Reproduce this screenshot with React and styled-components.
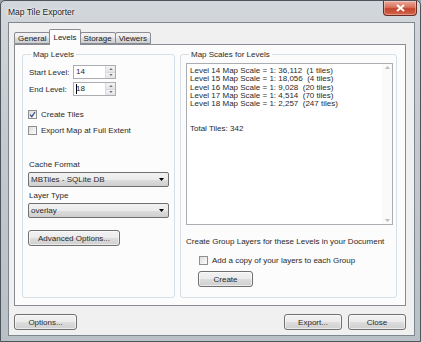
import React from 'react';
import styled, { createGlobalStyle } from 'styled-components';

const GlobalStyle = createGlobalStyle`
  html, body { margin: 0; padding: 0; background: #9aa3ab; }
  body { font-family: "Liberation Sans", Arial, sans-serif; font-size: 8px; color: #2a2a2a; }
`;

const Window = styled.div`
  width: 421px;
  height: 342px;
  box-sizing: border-box;
  padding: 21px 5px 5px 7px;
  display: flex;
  flex-direction: column;
  border: 1px solid #4e545b;
  border-radius: 5px 5px 0 0;
  background: linear-gradient(to bottom, #d3d7db 0%, #c3c9ce 40%, #b9c0c6 100%);
  position: relative;
`;

const TitleBar = styled.div`
  position: absolute;
  left: 0;
  right: 0;
  top: 0;
  height: 20px;
  display: flex;
  align-items: center;
  justify-content: space-between;
  padding: 0 3px 0 7px;
`;

const Title = styled.div`
  font-size: 8.5px;
  color: #1b1b1b;
  text-shadow: 0 0 4px #fff, 0 0 2px #fff;
  margin-top: 1px;
`;

const CloseButton = styled.div`
  width: 34px;
  height: 15px;
  margin-top: -5px;
  box-sizing: border-box;
  border: 1px solid #6b2a22;
  border-top: none;
  border-radius: 0 0 4px 4px;
  background: linear-gradient(to bottom, #e9a99b 0%, #d9725d 45%, #c4452d 55%, #d2634a 100%);
  box-shadow: inset 0 0 0 1px rgba(255, 255, 255, 0.35);
  display: flex;
  align-items: center;
  justify-content: center;
`;

const Client = styled.div`
  flex: 1;
  display: flex;
  flex-direction: column;
  box-sizing: border-box;
  border: 1px solid #7f868e;
  background: #f0f0f0;
  padding: 6px 8px 0 5px;
`;

const TabStrip = styled.div`
  display: flex;
  align-items: flex-end;
  height: 15px;
  padding-left: 1px;
  position: relative;
  z-index: 1;
`;

const Tab = styled.div`
  box-sizing: border-box;
  height: ${p => (p.$active ? '16px' : '12px')};
  margin-bottom: ${p => (p.$active ? '-1px' : '0')};
  padding: 0 3px;
  display: flex;
  align-items: center;
  border: 1px solid #898c95;
  border-bottom: ${p => (p.$active ? 'none' : '1px solid #898c95')};
  margin-left: -1px;
  border-radius: 2px 2px 0 0;
  background: ${p => (p.$active ? '#fcfcfc' : 'linear-gradient(to bottom, #f2f2f2 0%, #ebebeb 50%, #dddddd 51%, #cfcfcf 100%)')};
  font-size: 8px;
  color: #222;
`;

const TabPanel = styled.div`
  height: 262px;
  box-sizing: border-box;
  border: 1px solid #898c95;
  background: #fcfcfc;
  padding: 5px 8px 7px 7px;
  display: grid;
  grid-template-columns: 153px 1fr;
  gap: 5px;
`;

const GroupBox = styled.fieldset`
  margin: 0;
  min-width: 0;
  border: 1px solid #d5dfe5;
  border-radius: 3px;
  padding: ${p => p.$pad};
  display: flex;
  flex-direction: column;
  align-items: flex-start;
`;

const Legend = styled.legend`
  padding: 0 2px;
  margin-left: 3px;
  font-size: 8px;
  color: #2a2a2a;
  line-height: 9px;
`;

const FieldRow = styled.div`
  display: flex;
  align-items: center;
  margin-top: ${p => p.$mt || 0}px;
`;

const FieldLabel = styled.label`
  width: 44px;
  padding-left: 1px;
  font-size: 8px;
`;

const SpinBox = styled.div`
  display: flex;
  height: 14px;
  box-sizing: border-box;
  border: 1px solid #abadb3;
  background: #fff;
`;

const SpinText = styled.div`
  width: 29px;
  padding-left: 2px;
  font-size: 8px;
  line-height: 12px;
  position: relative;
`;

const Caret = styled.span`
  position: absolute;
  left: 2px;
  top: 1px;
  width: 1px;
  height: 10px;
  background: #000;
`;

const SpinButtons = styled.div`
  width: 9px;
  display: flex;
  flex-direction: column;
  border-left: 1px solid #d9dce1;
`;

const SpinArrow = styled.div`
  flex: 1;
  display: flex;
  align-items: center;
  justify-content: center;
  background: linear-gradient(to bottom, #f4f4f4, #e2e3e6);
  border-top: ${p => (p.$down ? '1px solid #d6d8dc' : 'none')};
`;

const CheckRow = styled.label`
  display: flex;
  align-items: center;
  gap: 4px;
  font-size: 8px;
  margin-top: ${p => p.$mt || 0}px;
  margin-left: ${p => p.$ml || 0}px;
`;

const CheckBox = styled.span`
  width: 9px;
  height: 9px;
  box-sizing: border-box;
  border: 1px solid #8e8f8f;
  background: linear-gradient(135deg, #dcdcdc 0%, #f4f4f4 70%, #fdfdfd 100%);
  display: flex;
  align-items: center;
  justify-content: center;
`;

const SmallLabel = styled.div`
  font-size: 8px;
  margin-top: ${p => p.$mt || 0}px;
  padding-left: 1px;
`;

const Select = styled.div`
  width: 141px;
  height: 15px;
  margin-top: 3px;
  box-sizing: border-box;
  border: 1px solid #707070;
  border-radius: 2px;
  background: linear-gradient(to bottom, #f2f2f2 0%, #ebebeb 50%, #dddddd 51%, #cfcfcf 100%);
  display: flex;
  align-items: center;
  justify-content: space-between;
  padding: 0 4px 0 2px;
  font-size: 8px;
`;

const Button = styled.div`
  width: ${p => p.$w}px;
  height: 16px;
  box-sizing: border-box;
  border: 1px solid #707070;
  border-radius: 3px;
  background: linear-gradient(to bottom, #f2f2f2 0%, #ebebeb 50%, #dddddd 51%, #cfcfcf 100%);
  box-shadow: inset 0 0 0 1px rgba(255, 255, 255, 0.6);
  display: flex;
  align-items: center;
  justify-content: center;
  font-size: 8px;
  margin-top: ${p => p.$mt || 0}px;
  margin-left: ${p => p.$ml || 0}px;
`;

const ScaleList = styled.div`
  width: 100%;
  height: 162px;
  box-sizing: border-box;
  border: 1px solid #abadb3;
  background: #fff;
  display: flex;
`;

const ScaleText = styled.div`
  flex: 1;
  padding: 3px 0 0 3px;
  font-size: 8px;
  line-height: 8.25px;
  white-space: pre;
`;

const ScrollBar = styled.div`
  width: 10px;
  display: flex;
  flex-direction: column;
  justify-content: space-between;
  align-items: center;
  padding: 2px 0;
  background: #fafafa;
`;

const Hint = styled.div`
  font-size: 8px;
  margin-top: 12px;
`;

const Footer = styled.div`
  display: flex;
  align-items: center;
  gap: 6px;
  margin-top: 8px;
`;

const Spacer = styled.div`
  flex: 1;
`;

const Tri = ({ up, color = '#000', w = 5, h = 3 }) => (
  <svg width={w} height={h} viewBox="0 0 5 3">
    <path d={up ? 'M0 3 L2.5 0 L5 3 Z' : 'M0 0 L5 0 L2.5 3 Z'} fill={color} />
  </svg>
);

const Check = () => (
  <svg width="7" height="7" viewBox="0 0 7 7">
    <path d="M1 3.6 L2.8 5.6 L6 1" fill="none" stroke="#3a4f84" strokeWidth="1.3" />
  </svg>
);

const Spin = ({ value, caret }) => (
  <SpinBox>
    <SpinText>{caret && <Caret />}{value}</SpinText>
    <SpinButtons>
      <SpinArrow><Tri up color="#6d7077" w={4} h={2} /></SpinArrow>
      <SpinArrow $down><Tri color="#6d7077" w={4} h={2} /></SpinArrow>
    </SpinButtons>
  </SpinBox>
);

const scales = [
  'Level 14 Map Scale = 1: 36,112  (1 tiles)',
  'Level 15 Map Scale = 1: 18,056  (4 tiles)',
  'Level 16 Map Scale = 1: 9,028  (20 tiles)',
  'Level 17 Map Scale = 1: 4,514  (70 tiles)',
  'Level 18 Map Scale = 1: 2,257  (247 tiles)',
  '',
  '',
  'Total Tiles: 342',
];

export default function App() {
  return (
    <>
      <GlobalStyle />
      <Window>
        <TitleBar>
          <Title>Map Tile Exporter</Title>
          <CloseButton>
            <svg width="9" height="8" viewBox="0 0 9 8">
              <path d="M1 1 L8 7 M8 1 L1 7" stroke="#fff" strokeWidth="2" />
            </svg>
          </CloseButton>
        </TitleBar>
        <Client>
          <TabStrip>
            <Tab>General</Tab>
            <Tab $active>Levels</Tab>
            <Tab>Storage</Tab>
            <Tab>Viewers</Tab>
          </TabStrip>
          <TabPanel>
            <GroupBox $pad="6px 4px 0 5px">
              <Legend>Map Levels</Legend>
              <FieldRow>
                <FieldLabel>Start Level:</FieldLabel>
                <Spin value="14" />
              </FieldRow>
              <FieldRow $mt={3}>
                <FieldLabel>End Level:</FieldLabel>
                <Spin value="18" caret />
              </FieldRow>
              <CheckRow $mt={14}>
                <CheckBox><Check /></CheckBox>
                Create Tiles
              </CheckRow>
              <CheckRow $mt={7}>
                <CheckBox />
                Export Map at Full Extent
              </CheckRow>
              <SmallLabel $mt={25}>Cache Format</SmallLabel>
              <Select>
                <span>MBTiles - SQLite DB</span>
                <Tri />
              </Select>
              <SmallLabel $mt={4}>Layer Type</SmallLabel>
              <Select>
                <span>overlay</span>
                <Tri />
              </Select>
              <Button $w={92} $mt={12}>Advanced Options...</Button>
            </GroupBox>
            <GroupBox $pad="4px 3px 0 5px">
              <Legend>Map Scales for Levels</Legend>
              <ScaleList>
                <ScaleText>{scales.join('\n')}</ScaleText>
                <ScrollBar>
                  <Tri up color="#b9bcc1" w={5} h={3} />
                  <Tri color="#b9bcc1" w={5} h={3} />
                </ScrollBar>
              </ScaleList>
              <Hint>Create Group Layers for these Levels in your Document</Hint>
              <CheckRow $mt={10} $ml={13}>
                <CheckBox />
                Add a copy of your layers to each Group
              </CheckRow>
              <Button $w={55} $mt={6} $ml={12}>Create</Button>
            </GroupBox>
          </TabPanel>
          <Footer>
            <Button $w={63}>Options...</Button>
            <Spacer />
            <Button $w={58}>Export...</Button>
            <Button $w={58}>Close</Button>
          </Footer>
        </Client>
      </Window>
    </>
  );
}
